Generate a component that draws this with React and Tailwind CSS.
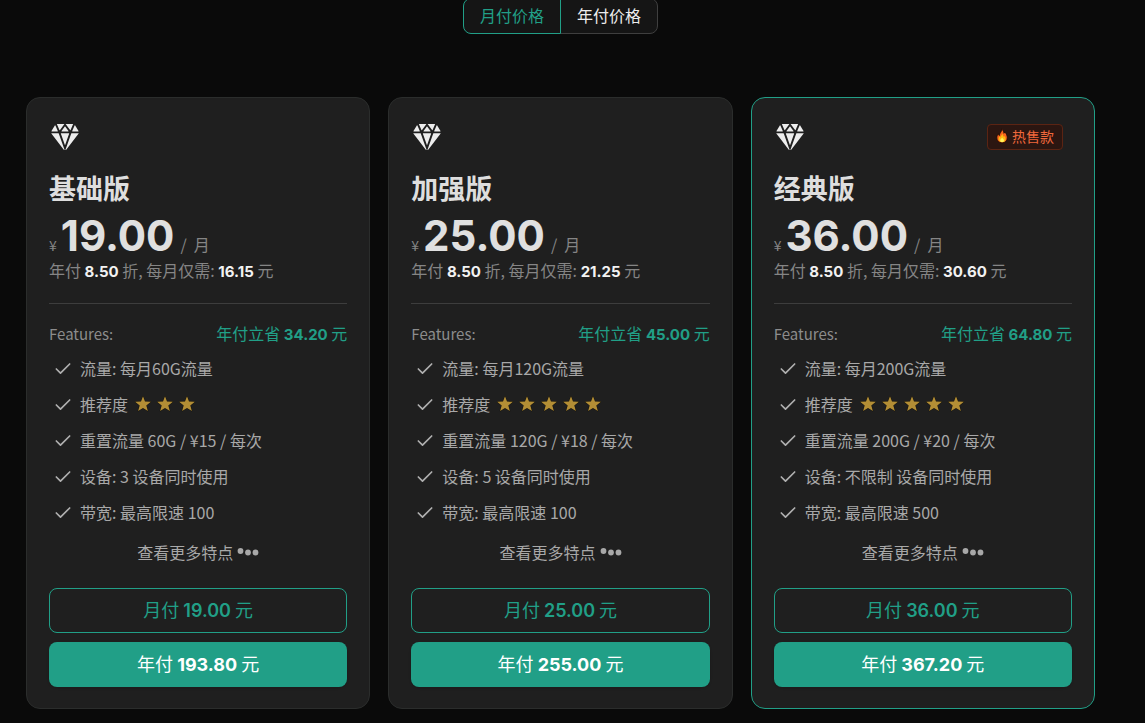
import React, { useState } from "react";
import { IoDiamond } from "react-icons/io5";
import { Check } from "lucide-react";

const plans = [
  {
    name: "基础版",
    price: "19.00",
    perMonth: "16.15",
    save: "34.20",
    yearly: "193.80",
    traffic: "每月60G流量",
    stars: 3,
    reset: "60G / ¥15 / 每次",
    devices: "3 设备同时使用",
    speed: "100",
  },
  {
    name: "加强版",
    price: "25.00",
    perMonth: "21.25",
    save: "45.00",
    yearly: "255.00",
    traffic: "每月120G流量",
    stars: 5,
    reset: "120G / ¥18 / 每次",
    devices: "5 设备同时使用",
    speed: "100",
  },
  {
    name: "经典版",
    price: "36.00",
    perMonth: "30.60",
    save: "64.80",
    yearly: "367.20",
    traffic: "每月200G流量",
    stars: 5,
    reset: "200G / ¥20 / 每次",
    devices: "不限制 设备同时使用",
    speed: "500",
    hot: true,
  },
];

const Star = () => (
  <svg viewBox="0 0 18 18" className="h-[18px] w-[18px]" aria-hidden="true">
    <path
      d="M9 1.200l2 5.400 5.900.2-4.600 3.600 1.600 5.700L9 12.900l-4.900 3.200 1.600-5.700L1.100 6.800l5.900-.2z"
      fill="#b38e35"
      stroke="#14120c"
      strokeWidth="1"
      paintOrder="stroke"
    />
  </svg>
);

const Flame = () => (
  <svg viewBox="0 0 12 16" className="h-4 w-3" aria-hidden="true">
    <path
      d="M5.600 1c2 1.500 2.100 3 2.300 4.300.5-.3.7-.8.8-1.400C10.300 5.500 11.300 7.700 11.300 9.800c0 3-2.300 5-5.200 5S.8 12.800.8 9.900C.8 7.900 1.700 6.700 2.500 5.800c.1.9.3 1.400.8 1.800C3.400 5 5.900 4.100 5.600 1z"
      fill="#f9651c"
      stroke="#160805"
      strokeWidth="0.8"
    />
    <path
      d="M6.400 5.800c.4 1.800 1.200 2.200 1.500 3.200.4-.2.6-.5.8-.9.700 1 .9 1.800.9 2.800 0 2-1.500 3.300-3.500 3.300s-3.500-1.300-3.500-3.200c0-1.100.4-1.900.9-2.500.2.5.5.7.8.9 0-1.500 1.700-1.900 2.100-3.600z"
      fill="#fdb813"
    />
    <path d="M6.100 9.500c.2 1 1.900 1.500 1.900 3 0 1-.8 1.600-1.900 1.600s-1.900-.6-1.900-1.600c0-1.500 1.700-2 1.900-3z" fill="#fff35c" />
  </svg>
);

const Dots = () => (
  <svg viewBox="0 0 22 10" className="h-[10px] w-[22px]" aria-hidden="true" fill="currentColor">
    <circle cx="3.500" cy="4" r="2.900" />
    <circle cx="11" cy="5.500" r="2.900" />
    <circle cx="18.500" cy="5.500" r="2.900" />
  </svg>
);

const Feature = ({ children }) => (
  <li className="flex h-9 items-center gap-[7px] pl-1">
    <Check size={20} strokeWidth={2} className="shrink-0 text-[#b0b0b0]" />
    <span className="flex items-center pb-0.5 whitespace-pre">{children}</span>
  </li>
);

const Num = ({ children, className = "font-bold" }) => (
  <span className={`font-['Inter'] ${className}`}>{children}</span>
);

const PlanCard = ({ plan }) => (
  <article
    className={`min-w-0 flex-1 rounded-[14px] border bg-[#1f1f1f] p-[22px] pb-[21px] ${
      plan.hot ? "border-[#219f87]" : "border-[#2b2d2c]"
    }`}
  >
    <div className="flex h-[34px] items-center justify-between">
      <IoDiamond size={30} className="ml-px text-[#ededed]" />
      {plan.hot && (
        <span className="mr-[9px] flex h-[26px] items-center gap-1 rounded border border-[#5b2413] bg-[#2b1611] px-2 pb-0.5 text-sm text-[#f0683c]">
          <Flame />
          热售款
        </span>
      )}
    </div>

    <h2 className="mt-[14px] text-[27px] leading-10 font-bold text-[#dedede]">{plan.name}</h2>

    {/* Price */}
    <div className="mt-2 flex h-[42px] items-baseline whitespace-pre text-[#858585]">
      <span className="text-sm">¥</span>
      <span className="ml-1 font-['Inter'] text-[42px] leading-10 font-bold text-[#e0e0e0]">{plan.price}</span>
      <span className="ml-1.5 text-base">/  月</span>
    </div>
    <p className="h-6 leading-6 whitespace-nowrap text-[#858585]">
      年付 <Num className="text-[15px] font-bold text-[#f2f2f2]">8.50</Num> 折, 每月仅需:{" "}
      <Num className="text-[15px] font-bold text-[#f2f2f2]">{plan.perMonth}</Num> 元
    </p>

    <hr className="mt-[21px] border-[#3d3d3d]" />

    {/* Features */}
    <div className="mt-[18px] flex h-6 items-center justify-between">
      <span className="text-[15px] text-[#8c8c8c]">Features:</span>
      <span className="text-[#219f87]">
        年付立省 <Num className="text-[15px] font-bold">{plan.save}</Num> 元
      </span>
    </div>
    <ul className="mt-[5px] text-[#a8a8a8]">
      <Feature>流量: {plan.traffic}</Feature>
      <Feature>
        推荐度
        <span className="ml-1.5 flex gap-1">
          {Array.from({ length: plan.stars }, (_, i) => (
            <Star key={i} />
          ))}
        </span>
      </Feature>
      <Feature>重置流量 {plan.reset}</Feature>
      <Feature>设备: {plan.devices}</Feature>
      <Feature>带宽: 最高限速 {plan.speed}</Feature>
    </ul>
    <button type="button" className="mx-auto mt-[9px] flex h-6 items-center gap-1 text-[#a8a8a8]">
      查看更多特点
      <Dots />
    </button>

    {/* Actions */}
    <div className="mt-6 flex flex-col gap-[9px]">
      <button type="button" className="h-[45px] rounded-lg border border-[#219f87] pb-0.5 text-lg text-[#219f87]">
        月付 <Num className="font-semibold">{plan.price}</Num> 元
      </button>
      <button type="button" className="h-[45px] rounded-lg bg-[#219f87] pb-0.5 text-lg text-white shadow-sm">
        年付 <Num>{plan.yearly}</Num> 元
      </button>
    </div>
  </article>
);

const PeriodOption = ({ label, value, period, onChange, className }) => (
  <label
    className={`relative flex cursor-pointer items-center border bg-[#151515] px-4 pb-0.5 ${className} ${
      period === value ? "z-10 border-[#219f87] text-[#219f87]" : "border-[#3f3f3f] text-[#ededed]"
    }`}
  >
    <input
      type="radio"
      name="period"
      value={value}
      checked={period === value}
      onChange={() => onChange(value)}
      className="sr-only"
    />
    {label}
  </label>
);

export default function App() {
  const [period, setPeriod] = useState("month");

  return (
    <main
      lang="zh-CN"
      className="min-h-screen bg-[#0a0a0a] pr-[50px] pb-3.5 pl-[26px] font-['Noto_Sans_CJK_SC',sans-serif] text-base"
    >
      <div className="flex justify-center pb-[63px]">
        <div className="-mt-0.5 flex h-9">
          <PeriodOption label="月付价格" value="month" period={period} onChange={setPeriod} className="rounded-l-lg" />
          <PeriodOption
            label="年付价格"
            value="year"
            period={period}
            onChange={setPeriod}
            className="-ml-px rounded-r-lg"
          />
        </div>
      </div>
      <div className="flex gap-[18px]">
        {plans.map((plan) => (
          <PlanCard key={plan.name} plan={plan} />
        ))}
      </div>
    </main>
  );
}
